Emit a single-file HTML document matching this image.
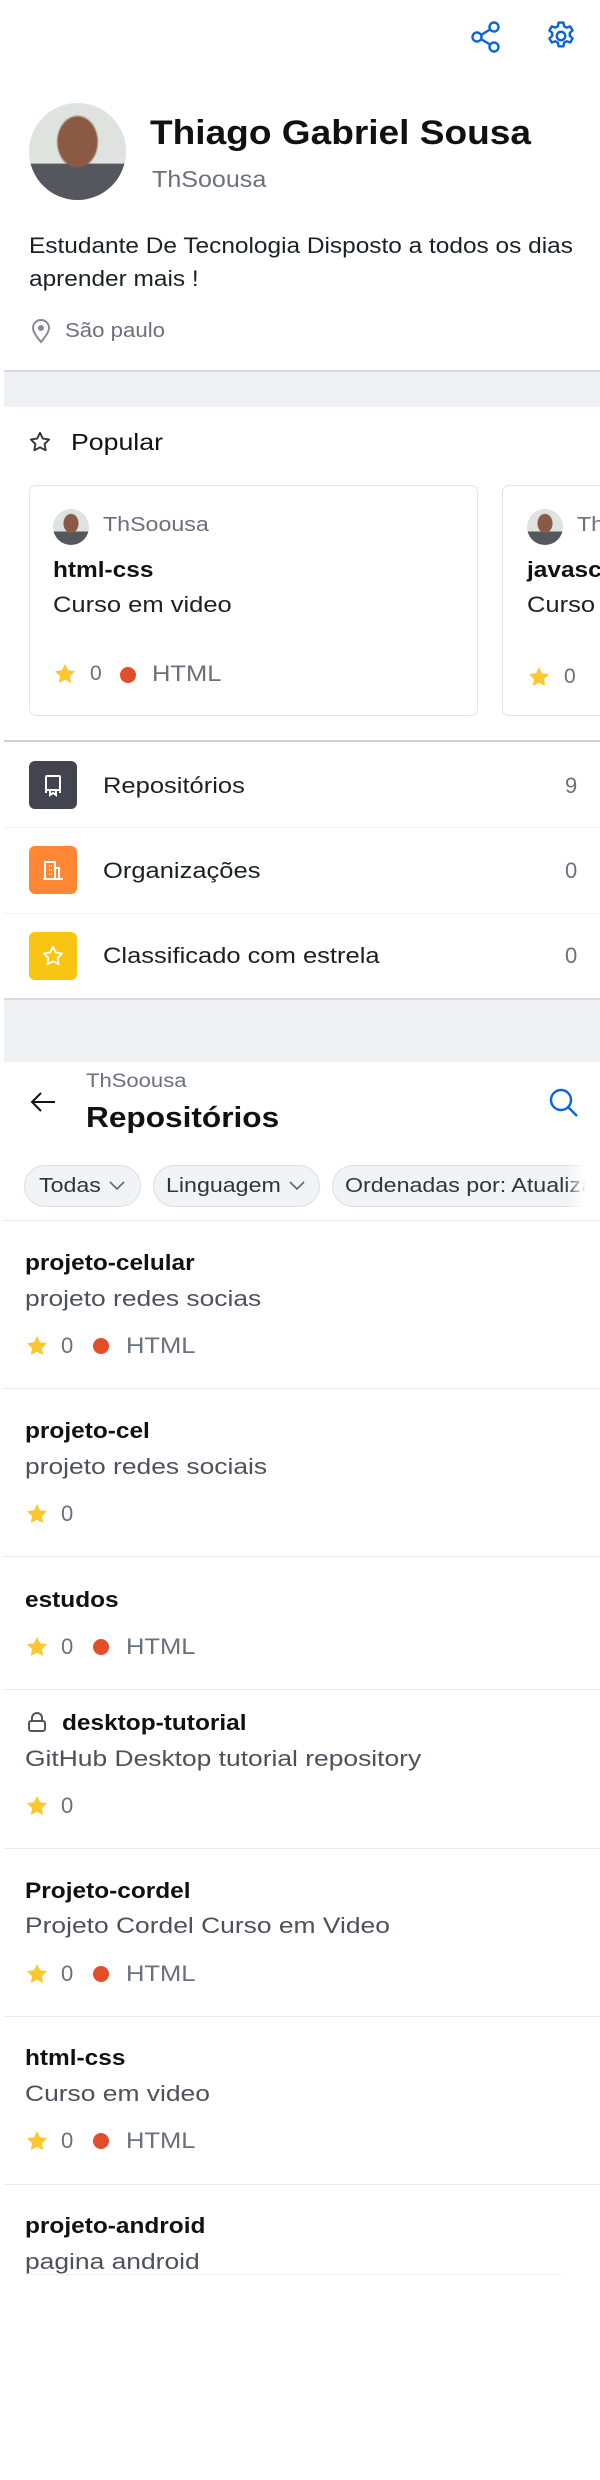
<!DOCTYPE html>
<html><head><meta charset="utf-8"><style>
*{margin:0;padding:0;box-sizing:border-box}
body{width:600px;height:2480px;background:#fff;position:relative;overflow:hidden;font-family:"Liberation Sans",sans-serif;color:#111}
.a{position:absolute;white-space:nowrap}
.t{position:absolute;white-space:nowrap;line-height:30px;height:30px}
.g{color:#6a707c}
.d{color:#4c515c}
.b{font-weight:bold}
.s09{transform:scaleX(1.09);transform-origin:0 50%}
.s11{transform:scaleX(1.11);transform-origin:0 50%}
.s15{transform:scaleX(1.16);transform-origin:0 50%}
.s20{transform:scaleX(1.2);transform-origin:0 50%}
.hr{position:absolute;left:4px;right:0;height:1px;background:#e6e8ec}
.dot{position:absolute;width:16px;height:16px;border-radius:50%;background:#e24d2a}
.chip{position:absolute;top:1165px;height:42px;border:1px solid #dcdfe4;background:#f2f3f6;border-radius:21px;font-size:20px;line-height:40px;color:#30343b;padding-left:14px;white-space:nowrap;overflow:hidden}
.chev{position:absolute;top:15px}
.sq{position:absolute;left:29px;width:48px;height:48px;border-radius:6px}
</style></head><body>
<svg class="a" style="left:470px;top:20px" width="32" height="34" viewBox="0 0 32 34" fill="none" stroke="#0a66d6" stroke-width="2.4"><circle cx="24" cy="7" r="4.5"/><circle cx="7" cy="17" r="4.5"/><circle cx="24" cy="27" r="4.5"/><path d="M11 15 20 9.5M11 19 20 24.5"/></svg>
<svg class="a" style="left:544px;top:19px" width="34" height="34" viewBox="0 0 24 24" fill="none" stroke="#0a66d6" stroke-width="1.7" stroke-linejoin="round"><circle cx="12" cy="12" r="3"/><path d="M10.3 2.5h3.4l.5 2.6 1.8 1 2.5-.9 1.7 2.9-2 1.7v2.2l2 1.7-1.7 2.9-2.5-.9-1.8 1-.5 2.6h-3.4l-.5-2.6-1.8-1-2.5.9-1.7-2.9 2-1.7v-2.2l-2-1.7 1.7-2.9 2.5.9 1.8-1z"/></svg>

<div class="a" style="left:29px;top:103px;width:97px;height:97px;border-radius:50%;background:radial-gradient(ellipse 22% 28% at 50% 40%,#8a5a44 0 90%,transparent 100%),linear-gradient(180deg,#dfe3df 0 62%,#55575e 63%);"></div>
<div class="a b s09" style="left:150px;top:113px;font-size:34px;line-height:40px">Thiago Gabriel Sousa</div>
<div class="t g s09" style="left:152px;top:164px;font-size:23px">ThSoousa</div>
<div class="a s11" style="left:29px;top:229px;font-size:22px;line-height:33px;color:#1c1f24">Estudante De Tecnologia Disposto a todos os dias<br>aprender mais !</div>
<svg class="a" style="left:30px;top:318px" width="22" height="26" viewBox="0 0 22 26" fill="none" stroke="#858a94" stroke-width="2"><path d="M11 24C5 17 3 13 3 10a8 8 0 0 1 16 0c0 3-2 7-8 14z"/><circle cx="11" cy="10" r="2" fill="#858a94"/></svg>
<div class="t g s11" style="left:65px;top:316px;font-size:20px">São paulo</div>

<div class="a" style="left:4px;right:0;top:370px;height:37px;background:#eff0f4;border-top:2px solid #d8dade"></div>

<svg class="a" style="left:29px;top:431px" width="22" height="22" viewBox="0 0 24 24" fill="none" stroke="#333" stroke-width="2" stroke-linejoin="round"><path d="M12 2l3.09 6.26L22 9.27l-5 4.87 1.18 6.88L12 17.77l-6.18 3.25L7 14.14 2 9.27l6.91-1.01L12 2z"/></svg>
<div class="t s15" style="left:71px;top:427px;font-size:23px">Popular</div>

<div class="a" style="left:29px;top:485px;width:449px;height:231px;border:1px solid #e2e4e8;border-radius:7px"></div>
<div class="a" style="left:502px;top:485px;width:200px;height:231px;border:1px solid #e2e4e8;border-radius:7px"></div>
<div class="a" style="left:53px;top:509px;width:36px;height:36px;border-radius:50%;background:radial-gradient(ellipse 22% 28% at 50% 40%,#8a5a44 0 90%,transparent 100%),linear-gradient(180deg,#dfe3df 0 62%,#55575e 63%)"></div>
<div class="a" style="left:527px;top:509px;width:36px;height:36px;border-radius:50%;background:radial-gradient(ellipse 22% 28% at 50% 40%,#8a5a44 0 90%,transparent 100%),linear-gradient(180deg,#dfe3df 0 62%,#55575e 63%)"></div>
<div class="t g s15" style="left:103px;top:510px;font-size:20px">ThSoousa</div>
<div class="t g s15" style="left:577px;top:510px;font-size:20px">Th</div>
<div class="t b s11" style="left:53px;top:555px;font-size:22px">html-css</div>
<div class="t b s11" style="left:527px;top:555px;font-size:22px">javasc</div>
<div class="t s15" style="left:53px;top:590px;font-size:22px;color:#1c1f24">Curso em video</div>
<div class="t s15" style="left:527px;top:590px;font-size:22px;color:#1c1f24">Curso</div>
<svg class="a" style="left:53px;top:662px" width="24" height="24" viewBox="0 0 24 24"><path fill="#fcc72f" d="M12 2l3.09 6.26L22 9.27l-5 4.87 1.18 6.88L12 17.77l-6.18 3.25L7 14.14 2 9.27l6.91-1.01L12 2z"/></svg>
<div class="t g" style="left:90px;top:659px;font-size:21px">0</div>
<div class="dot" style="left:120px;top:667px"></div>
<div class="t g s15" style="left:152px;top:659px;font-size:22px">HTML</div>
<svg class="a" style="left:527px;top:665px" width="24" height="24" viewBox="0 0 24 24"><path fill="#fcc72f" d="M12 2l3.09 6.26L22 9.27l-5 4.87 1.18 6.88L12 17.77l-6.18 3.25L7 14.14 2 9.27l6.91-1.01L12 2z"/></svg>
<div class="t g" style="left:564px;top:662px;font-size:21px">0</div>

<div class="hr" style="top:740px;height:2px;background:#cfd2d7"></div>
<div class="sq" style="top:761px;background:#42444f"></div>
<svg class="a" style="left:41px;top:773px" width="24" height="24" viewBox="0 0 24 24" fill="none" stroke="#fff" stroke-width="2"><rect x="5" y="3" width="14" height="14" rx="1"/><path d="M5 17v3M19 17v3M9 17v5l3-2 3 2v-5"/></svg>
<div class="t s15" style="left:103px;top:771px;font-size:22px;color:#1c1f24">Repositórios</div>
<div class="t g" style="left:565px;top:771px;font-size:22px">9</div>
<div class="hr" style="top:827px;background:#f1f2f4"></div>
<div class="sq" style="top:846px;background:#fd8733"></div>
<svg class="a" style="left:41px;top:858px" width="24" height="24" viewBox="0 0 24 24" fill="none" stroke="#fff" stroke-width="2"><path d="M4 21V4h10v17M14 10h4v11M2 21h20M8 8h1M10 8h1M8 12h1M10 12h1M8 16h1M10 16h1"/></svg>
<div class="t s15" style="left:103px;top:856px;font-size:22px;color:#1c1f24">Organizações</div>
<div class="t g" style="left:565px;top:856px;font-size:22px">0</div>
<div class="hr" style="top:913px;background:#f1f2f4"></div>
<div class="sq" style="top:932px;background:#f8c512"></div>
<svg class="a" style="left:42px;top:945px" width="22" height="22" viewBox="0 0 24 24" fill="none" stroke="#fff" stroke-width="2" stroke-linejoin="round"><path d="M12 2l3.09 6.26L22 9.27l-5 4.87 1.18 6.88L12 17.77l-6.18 3.25L7 14.14 2 9.27l6.91-1.01L12 2z"/></svg>
<div class="t s15" style="left:103px;top:941px;font-size:22px;color:#1c1f24">Classificado com estrela</div>
<div class="t g" style="left:565px;top:941px;font-size:22px">0</div>

<div class="a" style="left:4px;right:0;top:998px;height:64px;background:#eff0f4;border-top:2px solid #d8dade"></div>

<svg class="a" style="left:30px;top:1091px" width="26" height="22" viewBox="0 0 26 22" fill="none" stroke="#111" stroke-width="2"><path d="M25 11H2M11 2 2 11l9 9"/></svg>
<div class="t g s15" style="left:86px;top:1067px;font-size:19px">ThSoousa</div>
<div class="t b s09" style="left:86px;top:1100px;font-size:29px;line-height:36px;height:36px">Repositórios</div>
<svg class="a" style="left:548px;top:1087px" width="32" height="32" viewBox="0 0 32 32" fill="none" stroke="#0a66d6" stroke-width="2.4"><circle cx="13" cy="13" r="10"/><path d="M20.5 20.5 29 29"/></svg>

<div class="chip" style="left:24px;width:117px"><span class="a s15" style="left:14px">Todas</span><svg class="chev" style="left:84px" width="16" height="10" viewBox="0 0 16 10" fill="none" stroke="#666" stroke-width="1.6"><path d="M1 1l7 7 7-7"/></svg></div>
<div class="chip" style="left:153px;width:167px"><span class="a s15" style="left:12px">Linguagem</span><svg class="chev" style="left:135px" width="16" height="10" viewBox="0 0 16 10" fill="none" stroke="#666" stroke-width="1.6"><path d="M1 1l7 7 7-7"/></svg></div>
<div class="chip" style="left:332px;width:290px;border-right:none"><span class="a s15" style="left:12px">Ordenadas por: Atualiza</span></div>
<div class="a" style="left:565px;top:1160px;width:35px;height:50px;background:linear-gradient(90deg,rgba(255,255,255,0),#fff 60%)"></div>
<div class="hr" style="top:1220px"></div>

<!-- repo 1 -->
<div class="t b s11" style="left:25px;top:1248px;font-size:22px">projeto-celular</div>
<div class="t d s20" style="left:25px;top:1284px;font-size:22px">projeto redes socias</div>
<svg class="a" style="left:25px;top:1334px" width="24" height="24" viewBox="0 0 24 24"><path fill="#fcc72f" d="M12 2l3.09 6.26L22 9.27l-5 4.87 1.18 6.88L12 17.77l-6.18 3.25L7 14.14 2 9.27l6.91-1.01L12 2z"/></svg>
<div class="t g" style="left:61px;top:1331px;font-size:22px">0</div>
<div class="dot" style="left:93px;top:1338px"></div>
<div class="t g s15" style="left:126px;top:1331px;font-size:22px">HTML</div>
<div class="hr" style="top:1388px"></div>
<!-- repo 2 -->
<div class="t b s11" style="left:25px;top:1416px;font-size:22px">projeto-cel</div>
<div class="t d s20" style="left:25px;top:1452px;font-size:22px">projeto redes sociais</div>
<svg class="a" style="left:25px;top:1502px" width="24" height="24" viewBox="0 0 24 24"><path fill="#fcc72f" d="M12 2l3.09 6.26L22 9.27l-5 4.87 1.18 6.88L12 17.77l-6.18 3.25L7 14.14 2 9.27l6.91-1.01L12 2z"/></svg>
<div class="t g" style="left:61px;top:1499px;font-size:22px">0</div>
<div class="hr" style="top:1556px"></div>
<!-- repo 3 -->
<div class="t b s11" style="left:25px;top:1585px;font-size:22px">estudos</div>
<svg class="a" style="left:25px;top:1635px" width="24" height="24" viewBox="0 0 24 24"><path fill="#fcc72f" d="M12 2l3.09 6.26L22 9.27l-5 4.87 1.18 6.88L12 17.77l-6.18 3.25L7 14.14 2 9.27l6.91-1.01L12 2z"/></svg>
<div class="t g" style="left:61px;top:1632px;font-size:22px">0</div>
<div class="dot" style="left:93px;top:1639px"></div>
<div class="t g s15" style="left:126px;top:1632px;font-size:22px">HTML</div>
<div class="hr" style="top:1689px"></div>
<!-- repo 4 -->
<svg class="a" style="left:27px;top:1711px" width="20" height="22" viewBox="0 0 20 22" fill="none" stroke="#555" stroke-width="2"><rect x="2" y="10" width="16" height="10" rx="2"/><path d="M5 10V7a5 5 0 0 1 10 0v3"/></svg>
<div class="t b s11" style="left:62px;top:1708px;font-size:22px">desktop-tutorial</div>
<div class="t d s20" style="left:25px;top:1744px;font-size:22px">GitHub Desktop tutorial repository</div>
<svg class="a" style="left:25px;top:1794px" width="24" height="24" viewBox="0 0 24 24"><path fill="#fcc72f" d="M12 2l3.09 6.26L22 9.27l-5 4.87 1.18 6.88L12 17.77l-6.18 3.25L7 14.14 2 9.27l6.91-1.01L12 2z"/></svg>
<div class="t g" style="left:61px;top:1791px;font-size:22px">0</div>
<div class="hr" style="top:1848px"></div>
<!-- repo 5 -->
<div class="t b s11" style="left:25px;top:1876px;font-size:22px">Projeto-cordel</div>
<div class="t d s20" style="left:25px;top:1911px;font-size:22px">Projeto Cordel Curso em Video</div>
<svg class="a" style="left:25px;top:1962px" width="24" height="24" viewBox="0 0 24 24"><path fill="#fcc72f" d="M12 2l3.09 6.26L22 9.27l-5 4.87 1.18 6.88L12 17.77l-6.18 3.25L7 14.14 2 9.27l6.91-1.01L12 2z"/></svg>
<div class="t g" style="left:61px;top:1959px;font-size:22px">0</div>
<div class="dot" style="left:93px;top:1966px"></div>
<div class="t g s15" style="left:126px;top:1959px;font-size:22px">HTML</div>
<div class="hr" style="top:2016px"></div>
<!-- repo 6 -->
<div class="t b s11" style="left:25px;top:2043px;font-size:22px">html-css</div>
<div class="t d s20" style="left:25px;top:2079px;font-size:22px">Curso em video</div>
<svg class="a" style="left:25px;top:2129px" width="24" height="24" viewBox="0 0 24 24"><path fill="#fcc72f" d="M12 2l3.09 6.26L22 9.27l-5 4.87 1.18 6.88L12 17.77l-6.18 3.25L7 14.14 2 9.27l6.91-1.01L12 2z"/></svg>
<div class="t g" style="left:61px;top:2126px;font-size:22px">0</div>
<div class="dot" style="left:93px;top:2133px"></div>
<div class="t g s15" style="left:126px;top:2126px;font-size:22px">HTML</div>
<div class="hr" style="top:2184px"></div>
<!-- repo 7 -->
<div class="t b s11" style="left:25px;top:2211px;font-size:22px">projeto-android</div>
<div class="a d s20" style="left:25px;top:2247px;font-size:22px;line-height:30px;height:27px;overflow:hidden">pagina android</div>
<div class="a" style="left:25px;top:2274px;width:538px;height:1px;background:#f0f1f3"></div>
</body></html>
